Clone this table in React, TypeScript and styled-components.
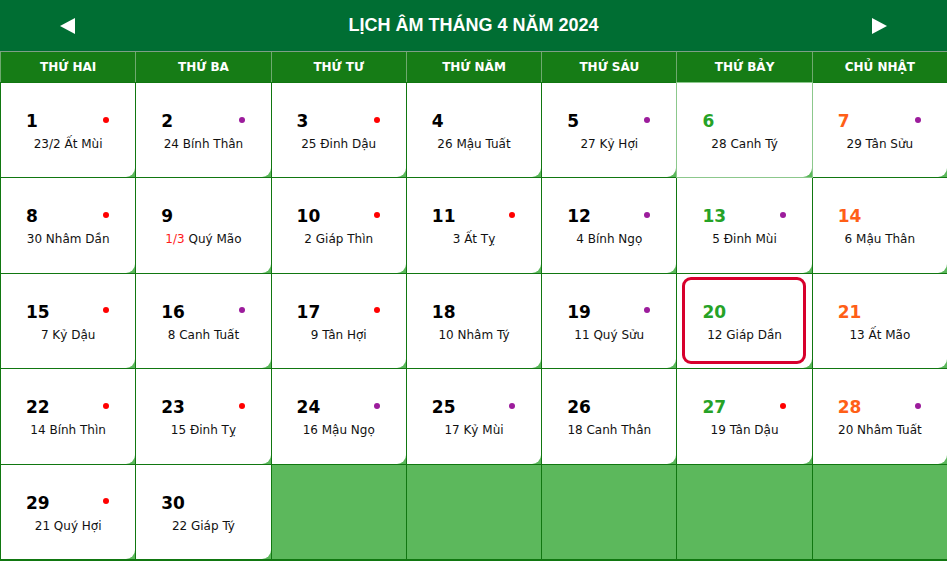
import * as React from 'react'
import styled, { createGlobalStyle } from 'styled-components'

//=================================/
const GlobalStyle = createGlobalStyle`
    html, body {
        margin: 0;
        padding: 0;
        background: #ffffff;
    }
`;

const Page = styled.div`
    width: 947px;
    height: 561px;
    overflow: hidden;
    display: flex;
    flex-direction: column;
    font-family: "DejaVu Sans", Verdana, sans-serif;
    background: #117711;
`;

const TopBar = styled.div`
    display: grid;
    grid-template-columns: 135px 1fr 135px;
    align-items: center;
    height: 51px;
    flex-shrink: 0;
    background: #006e33;
    border-bottom: 1px solid #7f9f86;
`;

const Arrow = styled.button`
    display: flex;
    align-items: center;
    justify-content: center;
    background: none;
    border: none;
    padding: 0;
    cursor: pointer;
    height: 100%;
`;

const Title = styled.h1`
    margin: 0;
    text-align: center;
    color: #ffffff;
    font-family: "Liberation Sans", Arial, sans-serif;
    font-weight: 700;
    font-size: 18px;
`;

const WeekHead = styled.div`
    display: grid;
    grid-template-columns: repeat(7, 1fr);
    gap: 1px;
    padding-left: 1px;
    flex-shrink: 0;
    background: #6fa96f;
    border-bottom: 1px solid #117711;
`;

const DayName = styled.div`
    height: 30px;
    display: flex;
    align-items: center;
    justify-content: center;
    background: #167c16;
    color: #ffffff;
    font-weight: 700;
    font-size: 12px;
`;

const Grid = styled.div`
    flex: 1;
    display: grid;
    grid-template-columns: repeat(7, 1fr);
    grid-template-rows: repeat(5, 1fr);
    gap: 1px;
    padding: 0 0 2px 1px;
    background: #117711;
`;

const Cell = styled.div<{ $soft?: boolean }>`
    position: relative;
    background: #5cb85c;
    ${p => p.$soft ? 'box-shadow: 0 0 0 1px #8cc88c; z-index: 1;' : ''}
`;

const Inner = styled.div<{ $today?: boolean }>`
    position: relative;
    height: 100%;
    box-sizing: border-box;
    background: #ffffff;
    border-bottom-right-radius: 9px;
    padding-top: 27px;
    &::after {
        content: '';
        display: ${p => p.$today ? 'block' : 'none'};
        position: absolute;
        left: 5px;
        right: 6px;
        top: 3px;
        bottom: 4px;
        border: 3px solid #d7002c;
        border-radius: 9px;
    }
`;

const TopRow = styled.div`
    display: flex;
    justify-content: space-between;
    align-items: center;
    padding: 0 26px 0 25px;
    height: 22px;
`;

const DayNum = styled.span<{ $color: string }>`
    font-weight: 700;
    font-size: 17px;
    color: ${p => p.$color};
`;

const Dot = styled.span<{ $color: string }>`
    width: 6px;
    height: 6px;
    border-radius: 50%;
    background: ${p => p.$color};
    margin-top: -3px;
`;

const Lunar = styled.div`
    margin-top: 5px;
    text-align: center;
    font-size: 12px;
    color: #111111;
`;

const LunarMark = styled.span`
    color: #ff1a1a;
`;
//=================================/

type Day = {
    d: number;
    lunar: string;
    mark?: string;
    dot?: 'red' | 'purple';
};

const days: Day[] = [
    { d: 1, lunar: '23/2 Ất Mùi', dot: 'red' },
    { d: 2, lunar: '24 Bính Thân', dot: 'purple' },
    { d: 3, lunar: '25 Đinh Dậu', dot: 'red' },
    { d: 4, lunar: '26 Mậu Tuất' },
    { d: 5, lunar: '27 Kỷ Hợi', dot: 'purple' },
    { d: 6, lunar: '28 Canh Tý' },
    { d: 7, lunar: '29 Tân Sửu', dot: 'purple' },
    { d: 8, lunar: '30 Nhâm Dần', dot: 'red' },
    { d: 9, lunar: ' Quý Mão', mark: '1/3' },
    { d: 10, lunar: '2 Giáp Thìn', dot: 'red' },
    { d: 11, lunar: '3 Ất Tỵ', dot: 'red' },
    { d: 12, lunar: '4 Bính Ngọ', dot: 'purple' },
    { d: 13, lunar: '5 Đinh Mùi', dot: 'purple' },
    { d: 14, lunar: '6 Mậu Thân' },
    { d: 15, lunar: '7 Kỷ Dậu', dot: 'red' },
    { d: 16, lunar: '8 Canh Tuất', dot: 'purple' },
    { d: 17, lunar: '9 Tân Hợi', dot: 'red' },
    { d: 18, lunar: '10 Nhâm Tý' },
    { d: 19, lunar: '11 Quý Sửu', dot: 'purple' },
    { d: 20, lunar: '12 Giáp Dần' },
    { d: 21, lunar: '13 Ất Mão' },
    { d: 22, lunar: '14 Bính Thìn', dot: 'red' },
    { d: 23, lunar: '15 Đinh Tỵ', dot: 'red' },
    { d: 24, lunar: '16 Mậu Ngọ', dot: 'purple' },
    { d: 25, lunar: '17 Kỷ Mùi', dot: 'purple' },
    { d: 26, lunar: '18 Canh Thân' },
    { d: 27, lunar: '19 Tân Dậu', dot: 'red' },
    { d: 28, lunar: '20 Nhâm Tuất', dot: 'purple' },
    { d: 29, lunar: '21 Quý Hợi', dot: 'red' },
    { d: 30, lunar: '22 Giáp Tý' },
];

const weekDays = ['THỨ HAI', 'THỨ BA', 'THỨ TƯ', 'THỨ NĂM', 'THỨ SÁU', 'THỨ BẢY', 'CHỦ NHẬT'];

const dotColors = { red: '#ff0000', purple: '#9c1c9c' };

const numColor = (i: number) => {
    if (i % 7 === 5) return '#26a226';
    if (i % 7 === 6) return '#ff5f17';
    return '#000000';
};

const Triangle: React.FC<{ dir: 'left' | 'right' }> = ({ dir }) => (
    <svg width="15" height="16" viewBox="0 0 15 16">
        {dir === 'left'
            ? <polygon points="15,0 15,16 0,8" fill="#ffffff" />
            : <polygon points="0,0 0,16 15,8" fill="#ffffff" />}
    </svg>
);

//=====================================================================================//
export default function App() {
    const blanks = 35 - days.length;
    return (
        <Page>
            <GlobalStyle />
            <TopBar>
                <Arrow aria-label="Tháng trước"><Triangle dir="left" /></Arrow>
                <Title>LỊCH ÂM THÁNG 4 NĂM 2024</Title>
                <Arrow aria-label="Tháng sau"><Triangle dir="right" /></Arrow>
            </TopBar>

            <WeekHead>
                {weekDays.map(w => <DayName key={w}>{w}</DayName>)}
            </WeekHead>

            <Grid>
                {days.map((day, i) => (
                    <Cell key={day.d} $soft={day.d === 6}>
                        <Inner $today={day.d === 20}>
                            <TopRow>
                                <DayNum $color={numColor(i)}>{day.d}</DayNum>
                                {day.dot && <Dot $color={dotColors[day.dot]} />}
                            </TopRow>
                            <Lunar>
                                {day.mark && <LunarMark>{day.mark}</LunarMark>}
                                {day.lunar}
                            </Lunar>
                        </Inner>
                    </Cell>
                ))}
                {Array.from({ length: blanks }).map((_, i) => <Cell key={'b' + i} />)}
            </Grid>
        </Page>
    );
}
//=====================================================================================//
